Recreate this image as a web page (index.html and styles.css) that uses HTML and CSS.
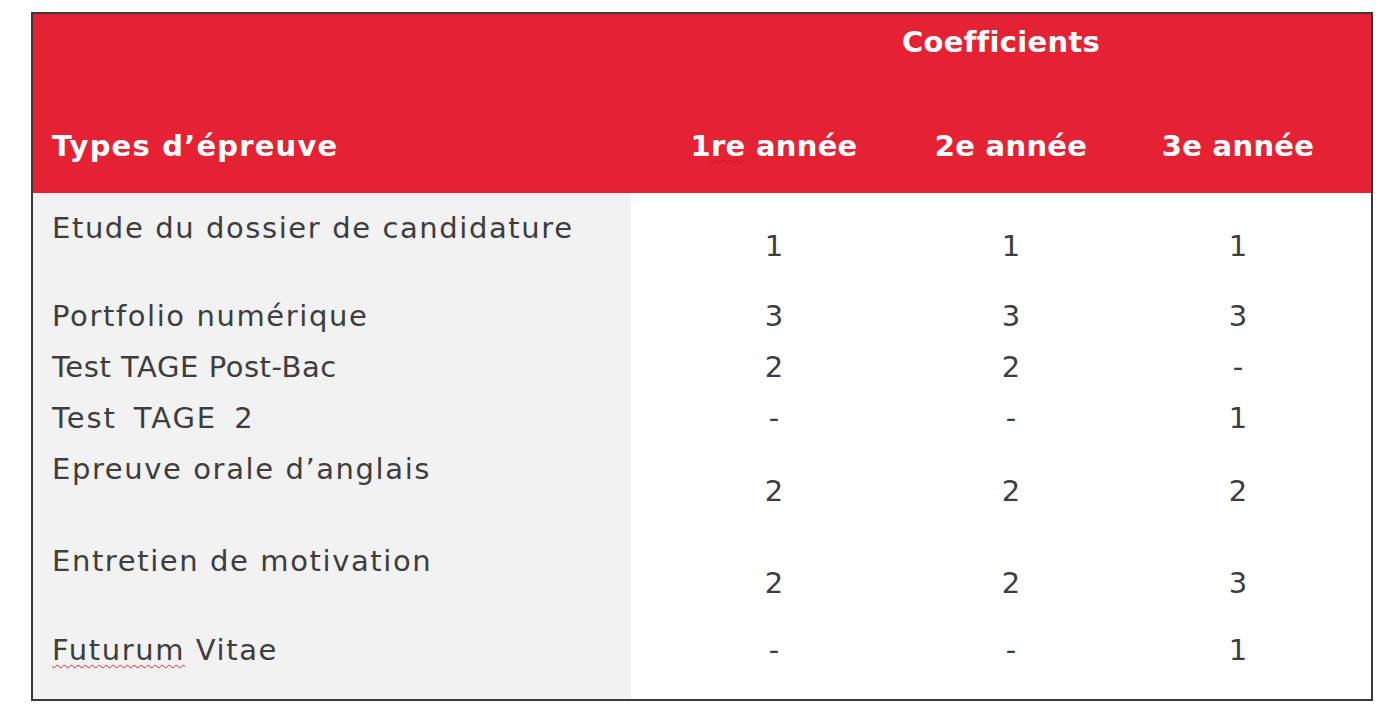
FILE: index.html
```html
<!DOCTYPE html>
<html lang="fr">
<head>
<meta charset="utf-8">
<title>Coefficients</title>
<link rel="stylesheet" href="styles.css">
</head>
<body>
<div class="table">
  <div class="head">
    <div class="row head-top">
      <div class="cell label"></div>
      <div class="cell span3">Coefficients</div>
    </div>
    <div class="row head-bottom">
      <div class="cell label types">Types d’épreuve</div>
      <div class="cell val">1<span class="spell-h">re</span> année</div>
      <div class="cell val">2e année</div>
      <div class="cell val">3e année</div>
    </div>
  </div>
  <div class="row r1">
    <div class="cell label">Etude du dossier de candidature</div>
    <div class="cell val">1</div>
    <div class="cell val">1</div>
    <div class="cell val">1</div>
  </div>
  <div class="row r-single">
    <div class="cell label">Portfolio numérique</div>
    <div class="cell val">3</div>
    <div class="cell val">3</div>
    <div class="cell val">3</div>
  </div>
  <div class="row r-single">
    <div class="cell label tight">Test TAGE Post-Bac</div>
    <div class="cell val">2</div>
    <div class="cell val">2</div>
    <div class="cell val">-</div>
  </div>
  <div class="row r-single">
    <div class="cell label wide">Test TAGE 2</div>
    <div class="cell val">-</div>
    <div class="cell val">-</div>
    <div class="cell val">1</div>
  </div>
  <div class="row r-double">
    <div class="cell label">Epreuve orale d’anglais</div>
    <div class="cell val">2</div>
    <div class="cell val">2</div>
    <div class="cell val">2</div>
  </div>
  <div class="row r-double">
    <div class="cell label">Entretien de motivation</div>
    <div class="cell val">2</div>
    <div class="cell val">2</div>
    <div class="cell val">3</div>
  </div>
  <div class="row r-last">
    <div class="cell label"><span class="spell">Futurum</span> Vitae</div>
    <div class="cell val">-</div>
    <div class="cell val">-</div>
    <div class="cell val">1</div>
  </div>
</div>
</body>
</html>
```

FILE: styles.css
```css
html, body {
  margin: 0;
  padding: 0;
  background: #ffffff;
}

body {
  font-family: "DejaVu Sans", "Liberation Sans", sans-serif;
  color: #3d3d3d;
}

.table {
  margin: 12px 0 0 31px;
  width: 1338px;
  border: 2px solid #3a3a3a;
  background: #ffffff;
}

.row {
  display: grid;
  grid-template-columns: 598px 286px 188px 266px;
  align-items: start;
}

.cell {
  font-size: 29px;
  line-height: 34px;
  white-space: nowrap;
}

.label {
  padding-left: 19px;
  background: #f2f2f2;
  align-self: stretch;
  letter-spacing: 1.6px;
}

.val {
  text-align: center;
}

/* header */
.head {
  background: #e52233;
  color: #ffffff;
  font-weight: bold;
}

.head .cell {
  font-size: 29px;
  font-weight: bold;
  letter-spacing: 0.3px;
}

.head .label {
  background: transparent;
  align-self: end;
}

.head .types {
  letter-spacing: 1.2px;
}

.head-top {
  height: 56px;
  align-items: center;
}

.span3 {
  grid-column: 2 / 5;
  text-align: center;
}

.head-bottom {
  height: 123px;
  align-items: end;
}

.head-bottom .cell {
  padding-bottom: 30px;
}

.spell-h {
  text-decoration: underline wavy #c8102e;
  text-decoration-thickness: 1px;
  text-underline-offset: 3px;
}

/* body rows */
.r1 {
  height: 97px;
}
.r1 .label {
  padding-top: 18px;
}
.r1 .val {
  padding-top: 36px;
}

.r-single {
  height: 51px;
  align-items: center;
}

.r-single .label {
  display: flex;
  align-items: center;
}

.r-double {
  height: 92px;
}
.r-double .label {
  padding-top: 9px;
}
.r-double .val {
  padding-top: 31px;
}

.r-last {
  height: 72px;
}
.r-last .cell {
  padding-top: 6px;
}

.tight {
  letter-spacing: 0.55px;
}

.wide {
  letter-spacing: 1.9px;
  word-spacing: 6px;
}

.spell {
  text-decoration: underline wavy #e0262f;
  text-decoration-thickness: 1px;
  text-underline-offset: 4px;
}
```
